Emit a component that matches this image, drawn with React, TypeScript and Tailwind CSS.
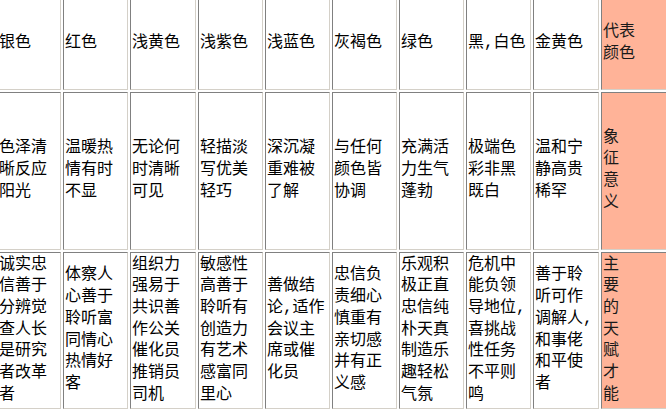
import React from "react";

const row1 = ["银色", "红色", "浅黄色", "浅紫色", "浅蓝色", "灰褐色", "绿色", "黑,白色", "金黄色"];
const row2 = [
  "色泽清晰反应阳光",
  "温暖热情有时不显",
  "无论何时清晰可见",
  "轻描淡写优美轻巧",
  "深沉凝重难被了解",
  "与任何颜色皆协调",
  "充满活力生气蓬勃",
  "极端色彩非黑既白",
  "温和宁静高贵稀罕",
];
const row3 = [
  "诚实忠信善于分辨觉查人长是研究者改革者",
  "体察人心善于聆听富同情心热情好客",
  "组织力强易于共识善作公关催化员推销员司机",
  "敏感性高善于聆听有创造力有艺术感富同里心",
  "善做结论,适作会议主席或催化员",
  "忠信负责细心慎重有亲切感并有正义感",
  "乐观积极正直忠信纯朴天真制造乐趣轻松气氛",
  "危机中能负领导地位,喜挑战性任务不平则鸣",
  "善于聆听可作调解人,和事佬和平使者",
];

const cell =
  "flex flex-col justify-center border border-t-[#808080] border-l-[#808080] border-r-[#d4d0c8] border-b-[#d4d0c8] px-[1px] py-[1px] text-black";
const hl =
  "flex flex-col justify-center border border-t-[#808080] border-l-[#808080] border-r-[#d4d0c8] border-b-[#d4d0c8] px-[1px] py-[1px] bg-[#ffb398] text-[#1a1a1a]";

function Lines({ items }: { items: string[] }) {
  return (
    <div>
      {items.map((t, i) => (
        <div key={i}>{t}</div>
      ))}
    </div>
  );
}

export default function App() {
  return (
    <div className="w-[666px] h-[411px] overflow-hidden bg-white">
      <div className="ml-[-3px] mt-[-2px] grid grid-cols-[64px_65px_66px_65px_65px_65px_65px_65px_66px_100px] grid-rows-[92px_158px_157px] gap-[2px] font-['Liberation_Mono','Noto_Sans_CJK_SC',monospace] text-[16px] leading-[21.7px]">
        {row1.map((t, i) => (
          <div key={"a" + i} className={cell}>
            {t}
          </div>
        ))}
        <div className={hl}>
          <Lines items={["代表", "颜色"]} />
        </div>
        {row2.map((t, i) => (
          <div key={"b" + i} className={cell}>
            {t}
          </div>
        ))}
        <div className={hl}>
          <Lines items={["象", "征", "意", "义"]} />
        </div>
        {row3.map((t, i) => (
          <div key={"c" + i} className={cell}>
            {t}
          </div>
        ))}
        <div className={hl}>
          <Lines items={["主", "要", "的", "天", "赋", "才", "能"]} />
        </div>
      </div>
    </div>
  );
}
